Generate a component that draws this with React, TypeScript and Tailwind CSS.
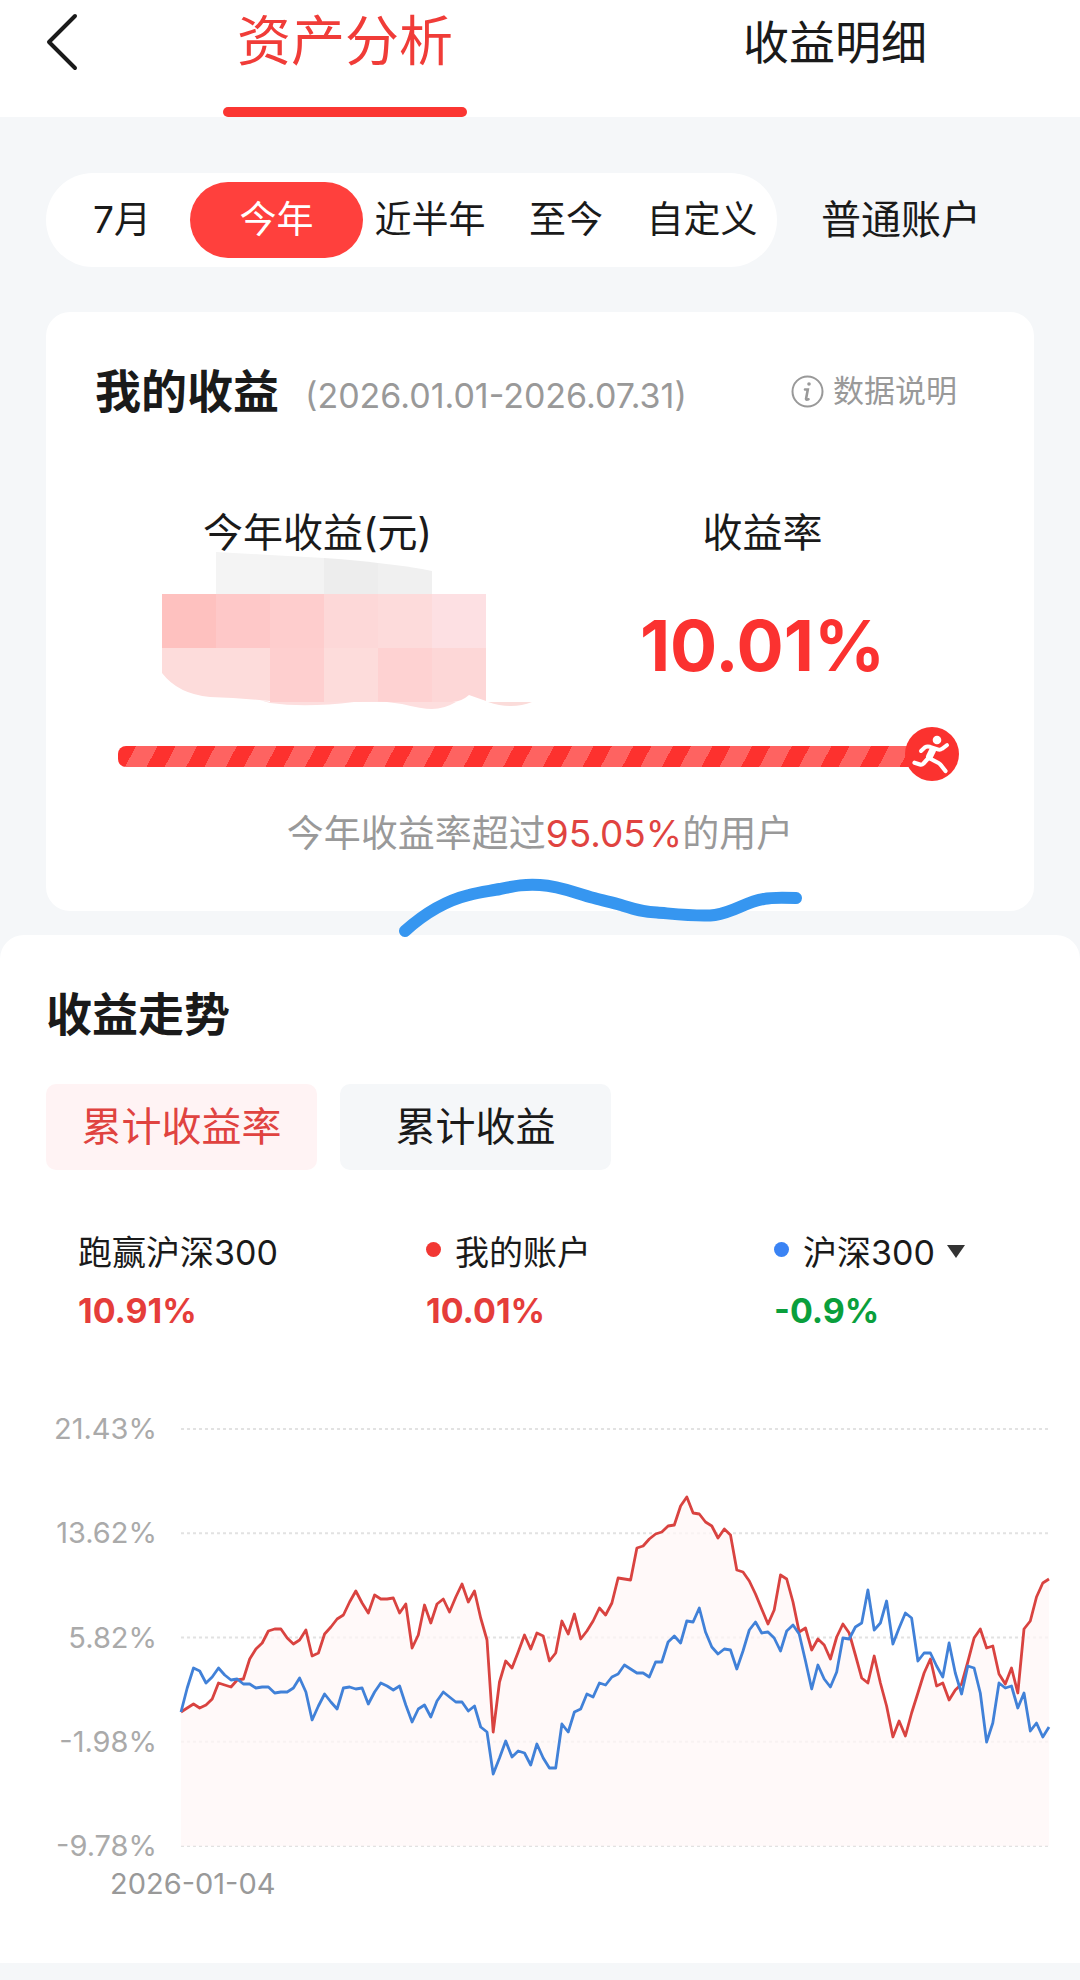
import React, { useState } from "react";

type Period = { label: string; width: string };

const periods: Period[] = [
  { label: "7月", width: "w-[136px]" },
  { label: "今年", width: "w-[173px]" },
  { label: "近半年", width: "w-[134px]" },
  { label: "至今", width: "w-[138px]" },
  { label: "自定义", width: "w-[134px]" },
];

const axisLabels = ["21.43%", "13.62%", "5.82%", "-1.98%", "-9.78%"];

const CHART_W = 868;
const CHART_H = 417;

// One value per trading day, measured down from the top grid line
const accountLine = [
  283, 279, 275, 279, 276, 270, 254, 256, 258, 251, 250, 230, 220, 214, 202, 200, 200, 209, 215, 211,
  201, 227, 224, 205, 198, 190, 186, 173, 162, 174, 184, 166, 170, 170, 169, 184, 175, 219, 206, 176,
  194, 175, 170, 183, 168, 155, 173, 162, 189, 211, 303, 253, 232, 239, 223, 206, 220, 204, 207, 232,
  224, 192, 205, 185, 210, 202, 192, 179, 186, 174, 149, 150, 151, 119, 117, 110, 105, 103, 97, 96,
  77, 68, 84, 85, 93, 97, 109, 100, 106, 141, 143, 152, 165, 180, 195, 181, 146, 150, 173, 203,
  199, 221, 210, 216, 230, 208, 195, 204, 226, 249, 254, 227, 254, 277, 308, 292, 307, 284, 264, 244,
  230, 257, 254, 271, 261, 255, 233, 209, 200, 219, 217, 245, 255, 239, 264, 200, 192, 168, 154, 150,
];

const indexLine = [
  283, 259, 239, 242, 254, 248, 239, 246, 251, 250, 255, 255, 259, 258, 258, 264, 263, 263, 259, 249,
  263, 291, 277, 265, 273, 280, 259, 258, 260, 259, 275, 263, 254, 257, 261, 257, 276, 293, 280, 276,
  288, 272, 263, 268, 273, 273, 282, 277, 298, 303, 345, 329, 312, 328, 322, 324, 336, 315, 329, 339,
  339, 295, 303, 283, 280, 265, 268, 254, 256, 248, 245, 236, 240, 244, 244, 248, 233, 233, 213, 207,
  214, 192, 193, 179, 203, 218, 225, 220, 221, 240, 222, 201, 193, 204, 203, 209, 222, 202, 196, 205,
  232, 260, 236, 250, 258, 243, 209, 210, 198, 194, 161, 201, 194, 172, 215, 199, 184, 189, 232, 224,
  224, 237, 248, 214, 244, 265, 237, 239, 264, 313, 294, 254, 259, 257, 279, 264, 302, 294, 308, 298,
];

const toPoints = (values: number[]) =>
  values.map((y, i) => `${((i * CHART_W) / (values.length - 1)).toFixed(1)},${y}`).join(" ");

const Header: React.FC = () => (
  <header className="flex h-[117px] bg-white">
    <button type="button" aria-label="返回" className="w-[100px] pl-[46px] pt-[13px] flex items-start">
      <svg width="34" height="58" viewBox="0 0 34 58" fill="none" stroke="#1a1a1a" strokeWidth="4" strokeLinecap="round" strokeLinejoin="round">
        <path d="M29 3 3 29l26 26" />
      </svg>
    </button>
    <nav className="flex-1 grid grid-cols-2">
      <a href="#analysis" aria-current="page" className="flex flex-col items-center justify-between text-[54px] leading-[84px] text-[#f03c38]">
        资产分析
        <span className="h-[10px] w-[244px] rounded-full bg-[#fb3632]" />
      </a>
      <a href="#detail" className="text-center text-[46px] leading-[84px] text-[#1a1a1a]">收益明细</a>
    </nav>
  </header>
);

const PeriodBar: React.FC = () => {
  const [active, setActive] = useState("今年");

  return (
    <div className="mt-14 flex items-center pl-[46px]">
      <div className="flex h-[94px] items-center rounded-full bg-white px-2">
        {periods.map((p) => (
          <button
            key={p.label}
            type="button"
            onClick={() => setActive(p.label)}
            className={`${p.width} h-[76px] rounded-full text-[37px] ${active === p.label ? "bg-[#ff403d] text-white" : "text-[#1a1a1a]"}`}
          >
            {p.label}
          </button>
        ))}
      </div>
      <button type="button" className="ml-11 text-[40px] text-[#1a1a1a]">普通账户</button>
    </div>
  );
};

// Censored amount
const Mosaic: React.FC = () => (
  <svg className="absolute left-[67px] -top-[55px]" width="370" height="161" viewBox="162 551 370 161" aria-hidden="true">
    <path fill="#f4f4f4" d="M216 552l54 3v39h-54z" />
    <path fill="#f3f3f3" d="M270 555l54 3v36h-54z" />
    <path fill="#ededed" d="M324 558q30 2 54 5v31h-54z" />
    <path fill="#f0f0f0" d="M378 563q30 3 54 8v23h-54z" />
    <path fill="#fec1bf" d="M162 594h54v54h-54z" />
    <path fill="#fec8c8" d="M216 594h54v54h-54z" />
    <path fill="#fecdcd" d="M270 594h54v54h-54z" />
    <path fill="#fdd8d8" d="M324 594h54v54h-54z" />
    <path fill="#fddbdb" d="M378 594h54v54h-54z" />
    <path fill="#fde0e3" d="M432 594h54v54h-54z" />
    <path fill="#fddcdb" d="M162 648h108v53q-30-3-60-4-32-3-48-24z" />
    <path fill="#fecfcf" d="M270 648h54v54h-54z" />
    <path fill="#fddcdb" d="M324 648h54v54h-54z" />
    <path fill="#fed2d2" d="M378 648h54v54h-54z" />
    <path fill="#fdd7d7" d="M432 648h54v53l-17-6q-8 7-17 7h-20z" />
    <path fill="#fddede" d="M260 700l10 2h186q-12 7-24 7-10 0-30-5-22-4-48-2-48 6-84 1z" />
    <path fill="#fbdcda" d="M488 702h44q-20 8-44 0z" />
  </svg>
);

const Runner: React.FC = () => (
  <svg className="-ml-3 shrink-0" width="54" height="54" viewBox="0 0 54 54" fill="none" stroke="#fff" strokeLinecap="round" strokeLinejoin="round" aria-hidden="true">
    <circle cx="27" cy="27" r="27" fill="#fb322f" stroke="none" />
    <circle cx="32" cy="13" r="4.3" fill="#fff" stroke="none" />
    <path strokeWidth="4" d="M16 24l4-3.800q2-1.200 5-.4l8.500 2.800q2 .4 3.500-.8l5-3.600" />
    <path strokeWidth="7" d="M27.500 23.500l-3 6" />
    <path strokeWidth="4.200" d="M23 31.500l-4.500 5q-1.500 1.500-3.500 1l-5.500-1.800M24 31l9.500 5q1.500.8 2.500 2.300l4.500 5.700" />
  </svg>
);

const ProfitCard: React.FC = () => (
  <section className="relative mx-[46px] mt-[45px] rounded-[24px] bg-white px-[49px] pt-[49px] pb-[52px]">
    <div className="flex h-[60px] items-center pr-7">
      <h2 className="text-[46px] font-bold text-[#1a1a1a]">我的收益</h2>
      <span className="ml-[26px] pt-2 text-[34px] text-[#999]">(2026.01.01-2026.07.31)</span>
      <button type="button" className="ml-auto flex items-center gap-[9px] text-[31px] text-[#999]">
        <svg width="33" height="33" viewBox="0 0 33 33" fill="none" stroke="#999" strokeWidth="2" strokeLinecap="round" aria-hidden="true">
          <circle cx="16.500" cy="16.500" r="15" />
          <circle cx="18" cy="9" r="1.800" fill="#999" stroke="none" />
          <path strokeWidth="2.600" d="M14 14.500h2.800l-1.800 9.500q0 1.200 2.500.3" />
        </svg>
        数据说明
      </button>
    </div>

    <div className="mt-[82px] grid grid-cols-2 text-center text-[40px] leading-[60px] text-[#1a1a1a]">
      <span>今年收益(元)</span>
      <span>收益率</span>
    </div>
    <div className="mt-[43px] grid grid-cols-2 text-center">
      <div className="relative"><Mosaic /></div>
      <strong className="text-[70px] leading-[80px] font-bold text-[#fb3230]">10.01%</strong>
    </div>

    <div className="mt-[41px] ml-[23px] mr-[26px] flex items-center">
      <div className="mt-1 h-[21px] flex-1 rounded-l-lg bg-[repeating-linear-gradient(118deg,#fd312e_0_16px,#fe6361_16px_35px)]" />
      <Runner />
    </div>
    <p className="mt-7 text-center text-[37px] leading-[50px] text-[#999]">
      今年收益率超过<span className="text-[#e04340]">95.05%</span>的用户
    </p>

    {/* Hand-drawn underline */}
    <svg className="absolute left-[350px] top-[564px] z-10" width="410" height="64" viewBox="396 876 410 64" fill="none" aria-hidden="true">
      <path
        d="M405 931Q436 903 469 895C480 892 490 891 500 889C515 886 524 884 540 885C560 886 575 893 594 898C604 901 612 902 621 905C634 909 643 912 657 912.500C675 914 700 917 715 915C735 912 745 902 764 899Q772 897 796 898"
        stroke="#3696f0"
        strokeWidth="12"
        strokeLinecap="round"
      />
    </svg>
  </section>
);

const TrendChart: React.FC = () => (
  <div className="mt-[78px]">
    <div className="flex pr-[31px]">
      <div className="flex w-[157px] flex-col justify-between text-right text-[29px] leading-[30px] text-[#aaa]">
        {axisLabels.map((label) => (
          <span key={label}>{label}</span>
        ))}
      </div>
      <div className="ml-6 flex-1 py-[15px]">
        <svg className="block h-[417px] w-full overflow-visible" viewBox={`0 0 ${CHART_W} ${CHART_H}`} preserveAspectRatio="none" fill="none" role="img" aria-label="收益走势图">
          {axisLabels.map((label, i) => (
            <line key={label} x1="0" x2={CHART_W} y1={(i * CHART_H) / 4} y2={(i * CHART_H) / 4} stroke="#e2e2e2" strokeWidth="2" strokeDasharray="3 3" />
          ))}
          <polygon points={`0,${CHART_H} ${toPoints(accountLine)} ${CHART_W},${CHART_H}`} fill="#fff7f7" fillOpacity="0.75" />
          <polyline points={toPoints(accountLine)} stroke="#d94340" strokeWidth="2.800" strokeLinejoin="round" />
          <polyline points={toPoints(indexLine)} stroke="#4181d8" strokeWidth="2.800" strokeLinejoin="round" />
        </svg>
      </div>
    </div>
    <div className="mt-[3px] pl-[110px] text-[29px] leading-10 text-[#999]">2026-01-04</div>
  </div>
);

const TrendSection: React.FC = () => {
  const [mode, setMode] = useState("累计收益率");

  return (
    <section className="mt-6 rounded-t-[24px] bg-white pt-[49px] pb-[59px]">
      <h2 className="pl-[46px] text-[46px] leading-[60px] font-bold text-[#1a1a1a]">收益走势</h2>

      <div className="mt-10 flex gap-[23px] pl-[46px]">
        {["累计收益率", "累计收益"].map((m) => (
          <button
            key={m}
            type="button"
            onClick={() => setMode(m)}
            className={`h-[86px] w-[271px] rounded-[10px] text-[40px] ${mode === m ? "bg-[#fff3f4] text-[#e04340]" : "bg-[#f5f7f9] text-[#1a1a1a]"}`}
          >
            {m}
          </button>
        ))}
      </div>

      <div className="mt-[58px] flex pl-[78px] text-[34px] leading-[50px] text-[#1a1a1a]">
        <div className="w-[348px]">
          <div>跑赢沪深300</div>
          <div className="mt-2 font-bold text-[#e53d3a]">10.91%</div>
        </div>
        <div className="w-[348px]">
          <div className="flex items-center gap-[14px]">
            <span className="mb-2 size-[15px] rounded-full bg-[#f23733]" />
            我的账户
          </div>
          <div className="mt-2 font-bold text-[#e53d3a]">10.01%</div>
        </div>
        <div>
          <div className="flex items-center">
            <span className="mb-2 mr-[14px] size-[15px] rounded-full bg-[#3a83f4]" />
            <select aria-label="对比指数" className="appearance-none bg-transparent">
              <option>沪深300</option>
            </select>
            <svg className="mb-1 ml-3" width="18" height="13" viewBox="0 0 18 13" aria-hidden="true">
              <path d="M0 0h18L9 13z" fill="#333" />
            </svg>
          </div>
          <div className="mt-2 font-bold text-[#0a9f3c]">-0.9%</div>
        </div>
      </div>

      <TrendChart />
    </section>
  );
};

const App: React.FC = () => {
  return (
    <div className="min-h-screen bg-[#f5f7f9] pb-[17px] font-['Inter','Noto_Sans_CJK_SC',sans-serif]">
      <Header />
      <main>
        <PeriodBar />
        <ProfitCard />
        <TrendSection />
      </main>
    </div>
  );
};

export default App;
